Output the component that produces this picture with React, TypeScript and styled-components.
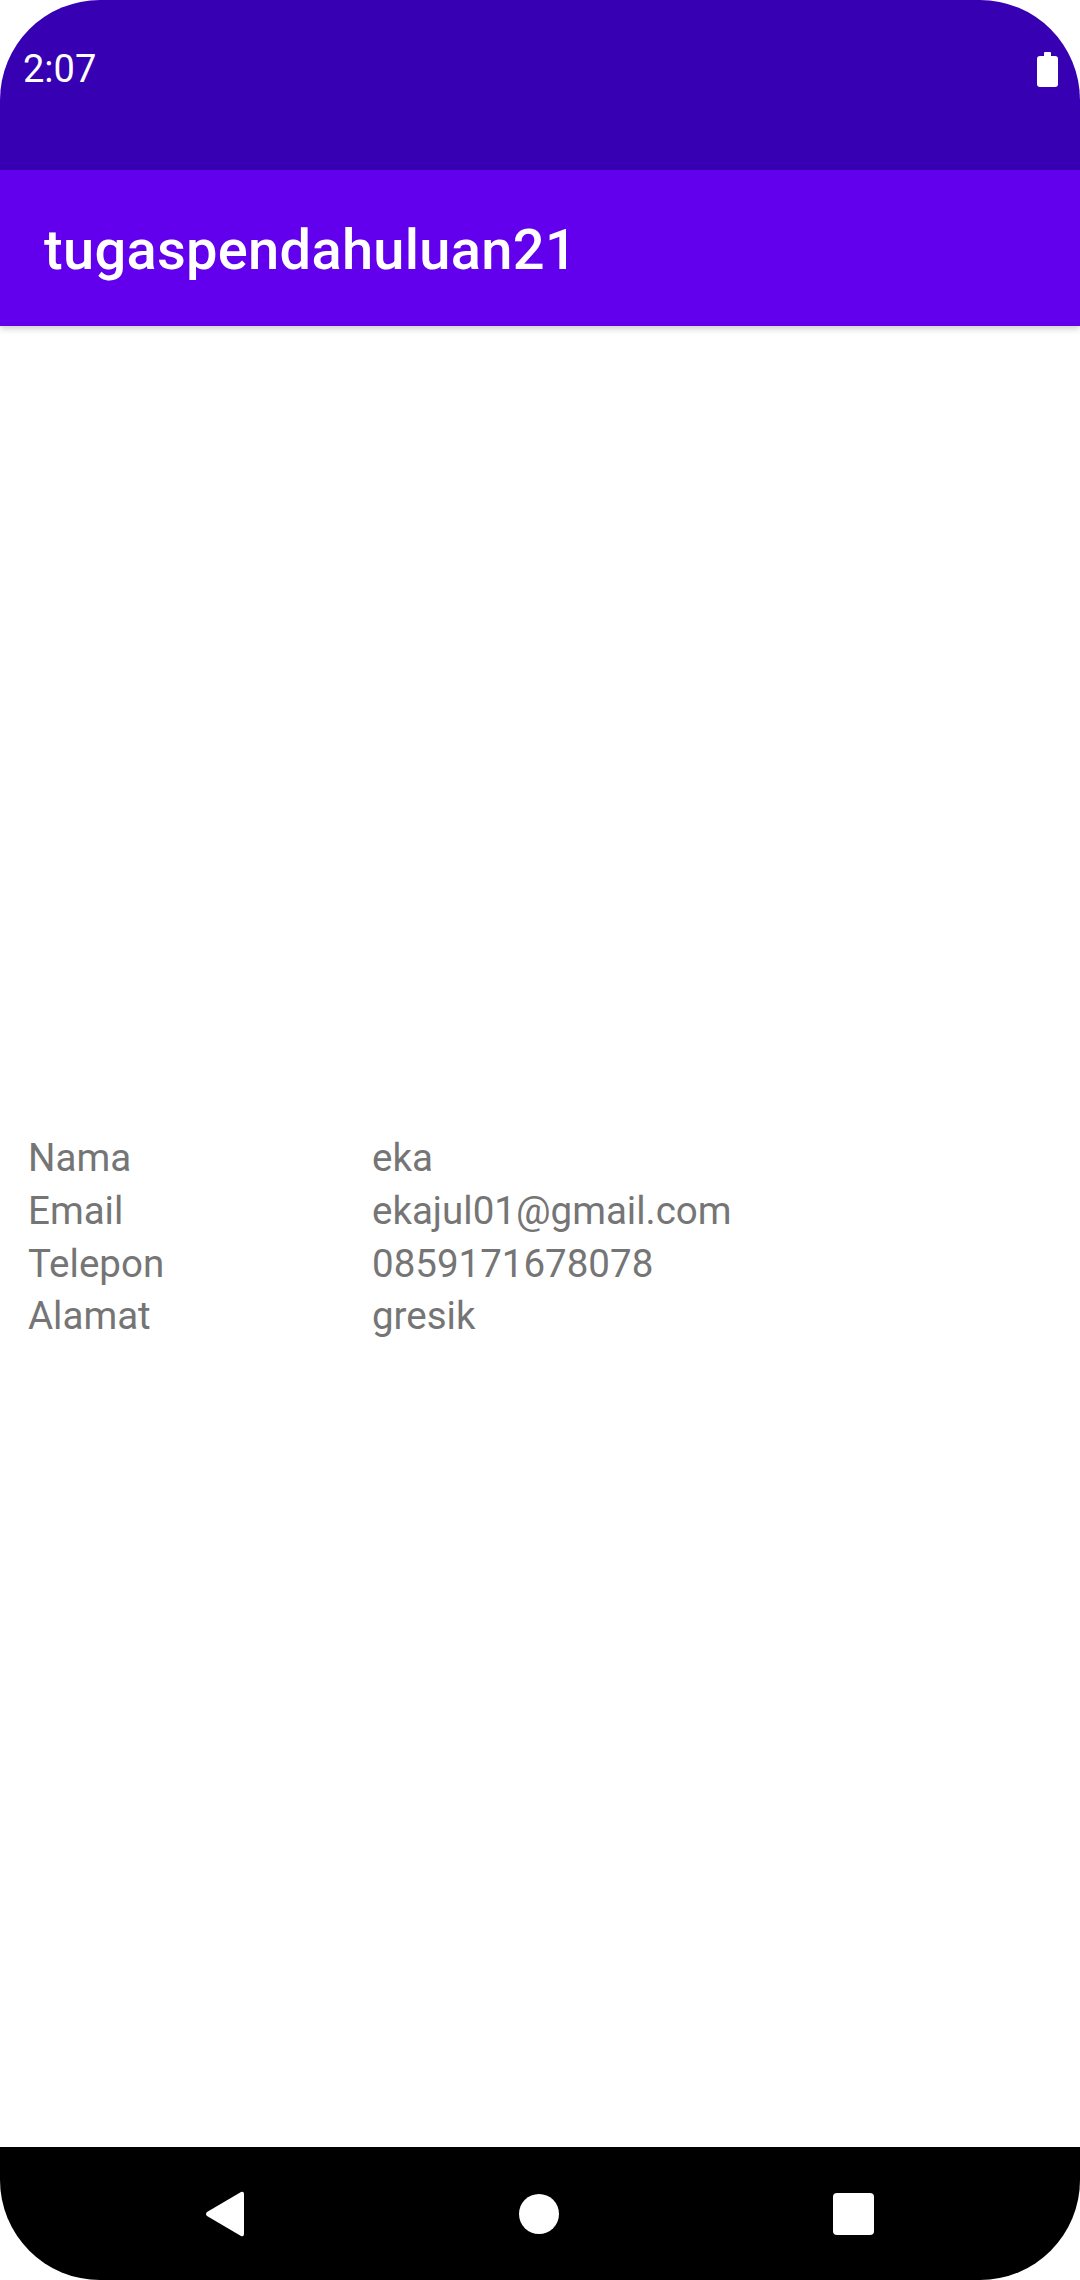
import { createGlobalStyle, styled } from 'styled-components'

const GlobalStyle = createGlobalStyle`
  html, body {
    margin: 0;
    padding: 0;
    background: #ffffff;
  }
  body {
    font-family: Roboto, "Liberation Sans", sans-serif;
  }
`

const Screen = styled.div`
  display: flex;
  flex-direction: column;
  width: 1080px;
  height: 2280px;
  background: #ffffff;
  overflow: hidden;
`

const StatusBar = styled.div`
  display: flex;
  align-items: center;
  justify-content: space-between;
  height: 170px;
  padding: 0 22px 32px 23px;
  box-sizing: border-box;
  background: #3700b3;
  border-radius: 100px 100px 0 0;
  color: #ffffff;
`

const Clock = styled.span`
  font-size: 38px;
  line-height: 1;
`

const Battery = styled.div`
  position: relative;
  width: 21px;
  height: 31px;
  margin-top: 4px;
  background: #ffffff;
  border-radius: 3px;

  &::before {
    content: '';
    position: absolute;
    top: -4px;
    left: 7px;
    width: 7px;
    height: 5px;
    background: #ffffff;
    border-radius: 1px 1px 0 0;
  }
`

const AppBar = styled.div`
  display: flex;
  align-items: center;
  height: 156px;
  padding: 4px 44px 0;
  box-sizing: border-box;
  background: #6200ee;
  box-shadow: 0 3px 6px rgba(0, 0, 0, 0.18);
  position: relative;
  z-index: 1;
`

const Title = styled.h1`
  margin: 0;
  font-size: 56px;
  font-weight: 500;
  color: #ffffff;
  letter-spacing: 0.3px;
`

const Content = styled.div`
  flex: 1 1 0;
  display: flex;
  flex-direction: column;
  justify-content: center;
  padding: 2px 28px 0;
`

const InfoGrid = styled.div`
  display: grid;
  grid-template-columns: 344px auto;
  font-size: 38.5px;
  line-height: 52.6px;
  color: #757575;
`

const Cell = styled.span``

const NavBar = styled.div`
  display: flex;
  align-items: center;
  justify-content: center;
  gap: 272px;
  height: 133px;
  padding-right: 2px;
  box-sizing: border-box;
  background: #000000;
  border-radius: 0 0 100px 100px;
`

const NavIcon = styled.svg`
  width: 42px;
  height: 46px;
  fill: #ffffff;
`

const rows: [string, string][] = [
  ['Nama', 'eka'],
  ['Email', 'ekajul01@gmail.com'],
  ['Telepon', '0859171678078'],
  ['Alamat', 'gresik'],
]

const App = () => {
  return (
    <Screen>
      <GlobalStyle />
      <StatusBar>
        <Clock>2:07</Clock>
        <Battery />
      </StatusBar>
      <AppBar>
        <Title>tugaspendahuluan21</Title>
      </AppBar>
      <Content>
        <InfoGrid>
          {rows.map(([label, value]) => (
            <>
              <Cell key={label}>{label}</Cell>
              <Cell key={label + '-v'}>{value}</Cell>
            </>
          ))}
        </InfoGrid>
      </Content>
      <NavBar>
        <NavIcon viewBox="0 0 42 46">
          <path d="M37 1 Q40 0 40 3 L40 43 Q40 46 37 45 L3 25 Q1 23 3 21 Z" />
        </NavIcon>
        <NavIcon viewBox="0 0 42 46">
          <circle cx="21" cy="23" r="20" />
        </NavIcon>
        <NavIcon viewBox="0 0 42 46">
          <rect x="1" y="2" width="41" height="42" rx="4" />
        </NavIcon>
      </NavBar>
    </Screen>
  )
}

export default App
